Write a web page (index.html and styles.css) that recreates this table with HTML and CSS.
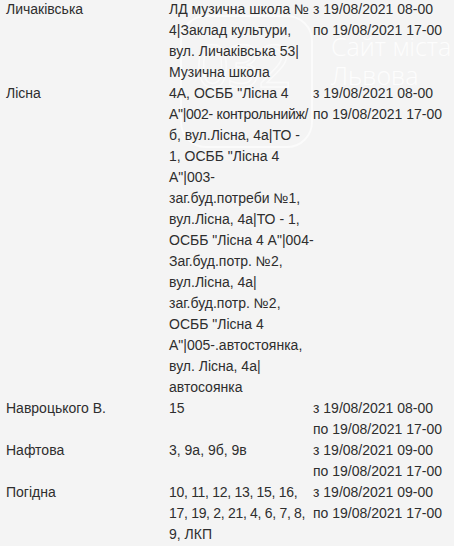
FILE: index.html
```html
<!DOCTYPE html>
<html lang="uk">
<head>
<meta charset="utf-8">
<title>Відключення</title>
<link rel="stylesheet" href="styles.css">
</head>
<body>
<div class="page">
  <div class="watermark" aria-hidden="true">
    <div class="wm-logo"><span class="wm-num">032</span></div>
    <div class="wm-text">Сайт міста<br>Львова</div>
  </div>
  <div class="list">
    <div class="row">
      <div class="street">Личаківська</div>
      <div class="houses">ЛД музична школа №<br>4|Заклад культури,<br>вул. Личаківська 53|<br>Музична школа</div>
      <div class="time">з 19/08/2021 08-00<br>по 19/08/2021 17-00</div>
    </div>
    <div class="row">
      <div class="street">Лісна</div>
      <div class="houses">4А, ОСББ "Лісна 4<br><span class="tight">А"|002- контрольнийж/</span><br>б, вул.Лісна, 4а|ТО -<br>1, ОСББ "Лісна 4<br>А"|003-<br>заг.буд.потреби №1,<br>вул.Лісна, 4а|ТО - 1,<br>ОСББ "Лісна 4 А"|004-<br>Заг.буд.потр. №2,<br>вул.Лісна, 4а|<br>заг.буд.потр. №2,<br>ОСББ "Лісна 4<br>А"|005-.автостоянка,<br>вул. Лісна, 4а|<br>автосоянка</div>
      <div class="time">з 19/08/2021 08-00<br>по 19/08/2021 17-00</div>
    </div>
    <div class="row">
      <div class="street">Навроцького В.</div>
      <div class="houses">15</div>
      <div class="time">з 19/08/2021 08-00<br>по 19/08/2021 17-00</div>
    </div>
    <div class="row">
      <div class="street">Нафтова</div>
      <div class="houses">3, 9а, 9б, 9в</div>
      <div class="time">з 19/08/2021 09-00<br>по 19/08/2021 17-00</div>
    </div>
    <div class="row">
      <div class="street">Погідна</div>
      <div class="houses"><span class="tight">10, 11, 12, 13, 15, 16,</span><br><span class="tight">17, 19, 2, 21, 4, 6, 7, 8,</span><br>9, ЛКП</div>
      <div class="time">з 19/08/2021 09-00<br>по 19/08/2021 17-00</div>
    </div>
  </div>
</div>
</body>
</html>
```

FILE: styles.css
```css
html, body {
  margin: 0;
  padding: 0;
  background: #f4f4f4;
}

body {
  font-family: "Liberation Sans", Arial, sans-serif;
  font-size: 14px;
  line-height: 21px;
  color: #2e2e2e;
  overflow: hidden;
}

.page {
  position: relative;
  width: 454px;
  height: 546px;
  overflow: hidden;
}

.list {
  position: relative;
  z-index: 1;
  padding-left: 6px;
  margin-top: -1px;
}

.row {
  display: grid;
  grid-template-columns: 163px 144px 1fr;
}

.houses,
.time {
  white-space: nowrap;
}

.tight {
  letter-spacing: -0.3px;
}

.watermark {
  position: absolute;
  left: 180px;
  top: 15px;
  z-index: 0;
  pointer-events: none;
}

.wm-logo {
  position: absolute;
  left: 0;
  top: 0;
  width: 133px;
  height: 133px;
  border: 2px solid rgba(255, 255, 255, 0.6);
  border-radius: 26px;
  box-sizing: border-box;
}

.wm-num {
  position: absolute;
  left: 14px;
  top: 18px;
  font-family: "Open Sans", "Liberation Sans", sans-serif;
  font-size: 58px;
  line-height: 60px;
  color: transparent;
  -webkit-text-stroke: 1.5px rgba(255, 255, 255, 0.55);
  letter-spacing: -2px;
}

.wm-text {
  position: absolute;
  left: 151px;
  top: 17px;
  font-family: "Open Sans", "Liberation Sans", sans-serif;
  font-weight: 300;
  font-size: 25px;
  line-height: 29px;
  color: rgba(255, 255, 255, 0.85);
  white-space: nowrap;
}
```
